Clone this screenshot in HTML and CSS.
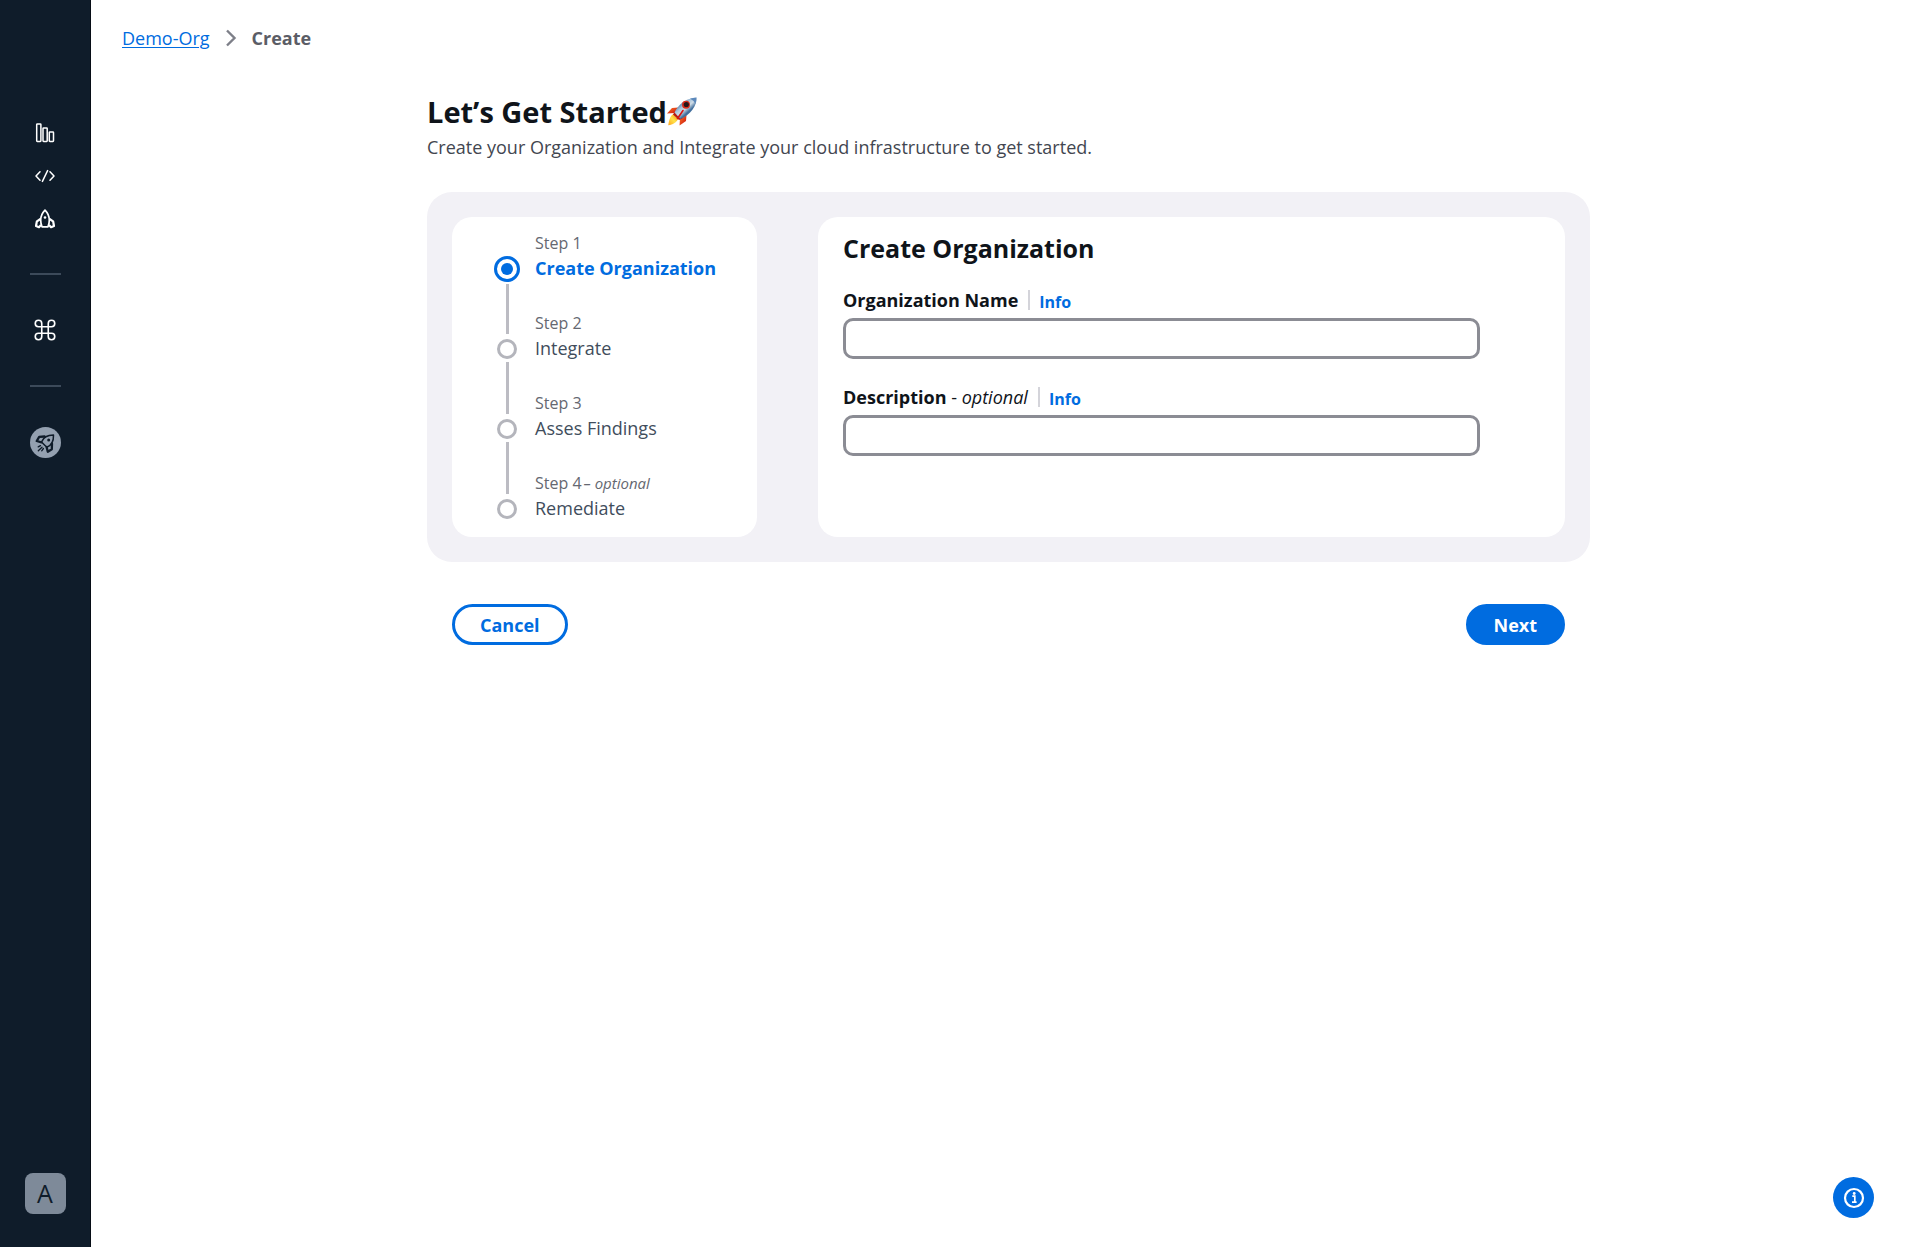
FILE: index.html
```html
<!DOCTYPE html>
<html lang="en">
<head>
<meta charset="utf-8">
<meta name="viewport" content="width=device-width, initial-scale=1">
<title>Create Organization</title>
<link rel="stylesheet" href="styles.css">
</head>
<body>
<div class="app">
  <nav class="sidebar" aria-label="Main">
    <div class="nav-group">
      <a class="nav-link" href="#dashboard" aria-label="Dashboard">
        <svg width="20" height="20" viewBox="0 0 20 20" fill="none" stroke="currentColor" stroke-width="1.5"><rect x="1.7" y="1" width="4.2" height="17.4" rx=".6"/><rect x="8" y="5" width="4.2" height="13.4" rx=".6"/><rect x="14.3" y="9" width="4.2" height="9.4" rx=".6"/></svg>
      </a>
      <a class="nav-link" href="#code" aria-label="Code">
        <svg width="20" height="20" viewBox="0 0 20 20" fill="none" stroke="currentColor" stroke-width="1.5" stroke-linecap="round" stroke-linejoin="round"><path d="M5 5.8 1 10l4 4.2M15 5.8l4 4.2-4 4.2M12.6 4.6 7.4 15.4"/></svg>
      </a>
      <a class="nav-link" href="#launch" aria-label="Launch">
        <svg width="20" height="20" viewBox="0 0 20 20" fill="none" stroke="currentColor" stroke-width="1.7" stroke-linejoin="round"><path d="M7 17.8C5 12.5 5.300 6 10 1.200c4.700 4.800 5 11.300 3 16.600z"/><path d="M5.400 10 1.900 12.300 1 17l3 1.200 2-2.200M14.600 10l3.500 2.300L19 17l-3 1.200-2-2.200" stroke-width="2.200"/><circle cx="10" cy="8.500" r="1.300" fill="currentColor" stroke="none"/></svg>
      </a>
    </div>
    <hr class="nav-rule">
    <a class="nav-link nav-link-tall" href="#shortcuts" aria-label="Shortcuts">
      <svg width="26" height="26" viewBox="0 0 24 24" fill="none" stroke="currentColor" stroke-width="1.5"><path d="M18 3a3 3 0 0 0-3 3v12a3 3 0 1 0 3-3H6a3 3 0 1 0 3 3V6a3 3 0 1 0-3 3h12a3 3 0 1 0 0-6z"/></svg>
    </a>
    <hr class="nav-rule">
    <a class="nav-link nav-link-tall" href="#organization" aria-label="Organization">
      <svg width="31" height="31" viewBox="0 0 31 31" fill="none"><circle cx="15.500" cy="15.500" r="15.500" fill="#94a0b0"/><g stroke="#0f1b29" stroke-width="1.500" stroke-linejoin="round" stroke-linecap="round"><path d="M11.500 15c1.600-4.300 5.700-7 12-7 .2 6.200-2.400 10.600-6.700 12.300z"/><path d="m14.500 9.500-5.300.3L6.700 14l4.800 1.300M22 16.700l-.2 5.500-4 2.500-1.200-4.700" stroke-width="2.300"/><path d="m10.500 18.600-2.300 1.300M12 20.200l-3.700 3.600M13.400 21.500l-1.700 2.300" stroke-width="1.300"/></g><circle cx="18.700" cy="13" r="1.500" fill="#0f1b29"/></svg>
    </a>
    <button class="account" type="button" aria-label="Account">A</button>
  </nav>

  <main class="page">
    <nav class="breadcrumb" aria-label="Breadcrumb">
      <a class="breadcrumb-link" href="#demo-org">Demo-Org</a>
      <svg width="12" height="18" viewBox="0 0 12 18" fill="none" stroke="#7d7f88" stroke-width="2.400"><path d="m2 1.500 7.500 7.500L2 16.500"/></svg>
      <span class="breadcrumb-current">Create</span>
    </nav>

    <div class="wizard">
      <header>
        <h1 class="title">Let’s Get Started<svg class="rocket" width="30" height="30" viewBox="0 0 30 30" aria-hidden="true">
          <defs>
            <linearGradient id="hull" x1="12" y1="7" x2="20" y2="16" gradientUnits="userSpaceOnUse"><stop offset="0" stop-color="#4674a4"/><stop offset=".35" stop-color="#a9c5dc"/><stop offset=".65" stop-color="#cfdce6"/><stop offset="1" stop-color="#426f9d"/></linearGradient>
            <linearGradient id="fin" x1="0" y1="0" x2="1" y2="1"><stop offset="0" stop-color="#ff7a2b"/><stop offset="1" stop-color="#c80b08"/></linearGradient>
            <linearGradient id="flame" x1="1" y1="0" x2="0" y2="1"><stop offset="0" stop-color="#f08a10"/><stop offset=".5" stop-color="#ffe34a"/><stop offset="1" stop-color="#ffa51f"/></linearGradient>
          </defs>
          <path d="M11 10.500 5 11 0 16.500l7.500-.5z" fill="url(#fin)"/>
          <path d="m19.500 18-.5 6-6.500 4.500.5-7z" fill="url(#fin)"/>
          <path d="M6.500 17C3 19 2 23 1.300 28.300 6 27.500 9 26 11 22z" fill="url(#flame)"/>
          <path d="m6 17.500 2-3 7.500 7-3.500 1.500z" fill="#b51a12"/>
          <path d="M7.500 15.500C11 8 18 1.500 29.500.5c.5 8.500-6 17-16 21.500z" fill="url(#hull)"/>
          <path d="M23 1.800c2-.8 4.500-1.200 6.500-1.300.1 2.200-.3 4.500-1.200 6.600-1-2.500-2.700-4.300-5.300-5.300z" fill="#5c88bb"/>
          <circle cx="19" cy="7.800" r="4" fill="#d92c1c"/><circle cx="19.300" cy="7.500" r="2.600" fill="#25161a"/>
          <path d="m16 13.500-5.500 8" stroke="#d71512" stroke-width="1.600" stroke-linecap="round"/>
        </svg></h1>
        <p class="subtitle">Create your Organization and Integrate your cloud infrastructure to get started.</p>
      </header>

      <div class="panel">
        <ol class="card steps">
          <li class="step step-active" aria-current="step">
            <span class="rail"><span class="dot"></span></span>
            <span class="step-text"><span class="step-label">Step 1</span><span class="step-name">Create Organization</span></span>
          </li>
          <li class="step">
            <span class="rail"><span class="dot"></span></span>
            <span class="step-text"><span class="step-label">Step 2</span><span class="step-name">Integrate</span></span>
          </li>
          <li class="step">
            <span class="rail"><span class="dot"></span></span>
            <span class="step-text"><span class="step-label">Step 3</span><span class="step-name">Asses Findings</span></span>
          </li>
          <li class="step">
            <span class="rail"><span class="dot"></span></span>
            <span class="step-text"><span class="step-label">Step 4<em class="step-optional">– optional</em></span><span class="step-name">Remediate</span></span>
          </li>
        </ol>

        <form class="card form" id="org-form">
          <h2 class="form-title">Create Organization</h2>
          <div class="field">
            <div class="field-head">
              <label class="field-label" for="org-name">Organization Name</label>
              <a class="info-link" href="#name-info">Info</a>
            </div>
            <input class="text-input" id="org-name" type="text">
          </div>
          <div class="field">
            <div class="field-head">
              <label class="field-label" for="org-desc">Description <span class="optional">- <em>optional</em></span></label>
              <a class="info-link" href="#description-info">Info</a>
            </div>
            <input class="text-input" id="org-desc" type="text">
          </div>
        </form>
      </div>

      <div class="actions">
        <button class="button button-outline" type="button">Cancel</button>
        <button class="button button-primary" type="submit" form="org-form">Next</button>
      </div>
    </div>
  </main>

  <button class="help" type="button" aria-label="Help">
    <svg width="22" height="22" viewBox="0 0 22 22" fill="none"><circle cx="11" cy="11" r="9" stroke="#fff" stroke-width="2.200"/><path d="M9.300 9.200h2.500v5.600M9 15.200h4.600" stroke="#fff" stroke-width="1.700"/><circle cx="11.200" cy="6.500" r="1.400" fill="#fff"/></svg>
  </button>
</div>
</body>
</html>
```
FILE: styles.css
```css
:root {
  --navy: #0f1c2a;
  --blue: #006ce0;
  --ink: #0f141a;
  --panel: #f2f1f6;
  --grey: #bcbcc3;
}

* {
  box-sizing: border-box;
}

body {
  margin: 0;
  background: #fff;
  color: var(--ink);
  font-family: "Open Sans", "Noto Sans", sans-serif;
  font-size: 18px;
  line-height: 26px;
}

.app {
  display: flex;
  min-height: 100vh;
}

.sidebar {
  display: flex;
  flex-direction: column;
  align-items: center;
  flex: none;
  width: 91px;
  padding: 111px 0 33px;
  background: var(--navy);
  border-right: 1px solid #070d16;
}

.nav-group {
  display: flex;
  flex-direction: column;
  padding-bottom: 33px;
}

.nav-link {
  display: flex;
  align-items: center;
  justify-content: center;
  width: 43px;
  height: 43px;
  color: #fff;
}

.nav-link-tall {
  height: 110px;
}

.nav-rule {
  width: 31px;
  height: 2px;
  margin: 0;
  border: 0;
  background: #3c4a5a;
}

.account {
  width: 41px;
  height: 41px;
  margin-top: auto;
  padding: 0;
  border: 0;
  border-radius: 8px;
  background: #7e8a99;
  color: var(--navy);
  font: 500 25px/41px "Open Sans", sans-serif;
}

.page {
  flex: 1;
  min-width: 0;
  padding: 25px 25px 40px 31px;
}

.breadcrumb {
  display: flex;
  align-items: center;
  gap: 15px;
}

.breadcrumb-link {
  color: var(--blue);
  text-decoration-thickness: 1px;
  text-underline-offset: 2px;
}

.breadcrumb-current {
  color: #5b5d66;
  font-weight: 700;
}

.wizard {
  max-width: 1163px;
  margin: 39px auto 0;
}

.title {
  display: flex;
  align-items: center;
  margin: 0;
  font-size: 29px;
  font-weight: 700;
  line-height: 44px;
}

.subtitle {
  margin: 0;
  color: #424650;
}

.panel {
  display: flex;
  gap: 61px;
  margin-top: 32px;
  padding: 25px;
  border-radius: 25px;
  background: var(--panel);
}

.card {
  border-radius: 20px;
  background: #fff;
}

.steps {
  flex: none;
  width: 305px;
  margin: 0;
  padding: 15px 20px 15px 42px;
  list-style: none;
}

.step {
  display: flex;
  gap: 15px;
  height: 80px;
}

.step:last-child {
  height: 50px;
}

.rail {
  display: flex;
  flex-direction: column;
  align-items: center;
  width: 26px;
}

.rail::before {
  content: "";
  width: 3px;
  height: 22px;
  margin-bottom: 5px;
  background: var(--grey);
}

.rail::after {
  content: "";
  flex: 1;
  width: 3px;
  margin-top: 3px;
  background: var(--grey);
}

.step:first-child .rail::before,
.step:last-child .rail::after {
  background: none;
}

.dot {
  width: 20px;
  height: 20px;
  border: 3px solid #b4b5bc;
  border-radius: 50%;
}

.step-active .rail::before {
  margin-bottom: 2px;
}

.step-active .rail::after {
  margin-top: 2px;
}

.step-active .dot {
  width: 26px;
  height: 26px;
  padding: 4px;
  border-color: var(--blue);
  background: var(--blue) content-box;
}

.step-text {
  display: flex;
  flex-direction: column;
}

.step-label {
  color: #656871;
  font-size: 16px;
  line-height: 23px;
}

.step-optional {
  padding-left: 2px;
  font-size: 15px;
}

.step-name {
  color: #414d5c;
}

.step-active .step-name {
  color: var(--blue);
  font-weight: 700;
}

.form {
  flex: 1;
  min-width: 0;
  padding: 16px 85px 25px 25px;
}

.form-title {
  margin: 0 0 24px;
  font-size: 25px;
  font-weight: 700;
  line-height: 30px;
}

.field {
  margin-bottom: 25px;
}

.field-head {
  display: flex;
  margin-bottom: 5px;
}

.field-label {
  font-weight: 700;
}

.optional {
  font-weight: 400;
}

.info-link {
  height: 20px;
  margin: 3px 0 3px 10px;
  padding-left: 9px;
  border-left: 2px solid #d4d4da;
  color: var(--blue);
  font-size: 16px;
  font-weight: 700;
  line-height: 25px;
  text-decoration: none;
}

.text-input {
  display: block;
  width: 100%;
  height: 41px;
  padding: 0 12px;
  border: 3px solid #8b8c94;
  border-radius: 10px;
  background: #fff;
  color: var(--ink);
  font: inherit;
}

.actions {
  display: flex;
  justify-content: space-between;
  padding: 42px 25px 0;
}

.button {
  height: 41px;
  padding: 0 25px;
  border: 3px solid var(--blue);
  border-radius: 21px;
  font: inherit;
  font-weight: 700;
}

.button-outline {
  background: #fff;
  color: var(--blue);
}

.button-primary {
  background: var(--blue);
  color: #fff;
}

.help {
  position: fixed;
  right: 46px;
  bottom: 29px;
  display: flex;
  align-items: center;
  justify-content: center;
  width: 41px;
  height: 41px;
  padding: 0;
  border: 0;
  border-radius: 50%;
  background: var(--blue);
}
```
